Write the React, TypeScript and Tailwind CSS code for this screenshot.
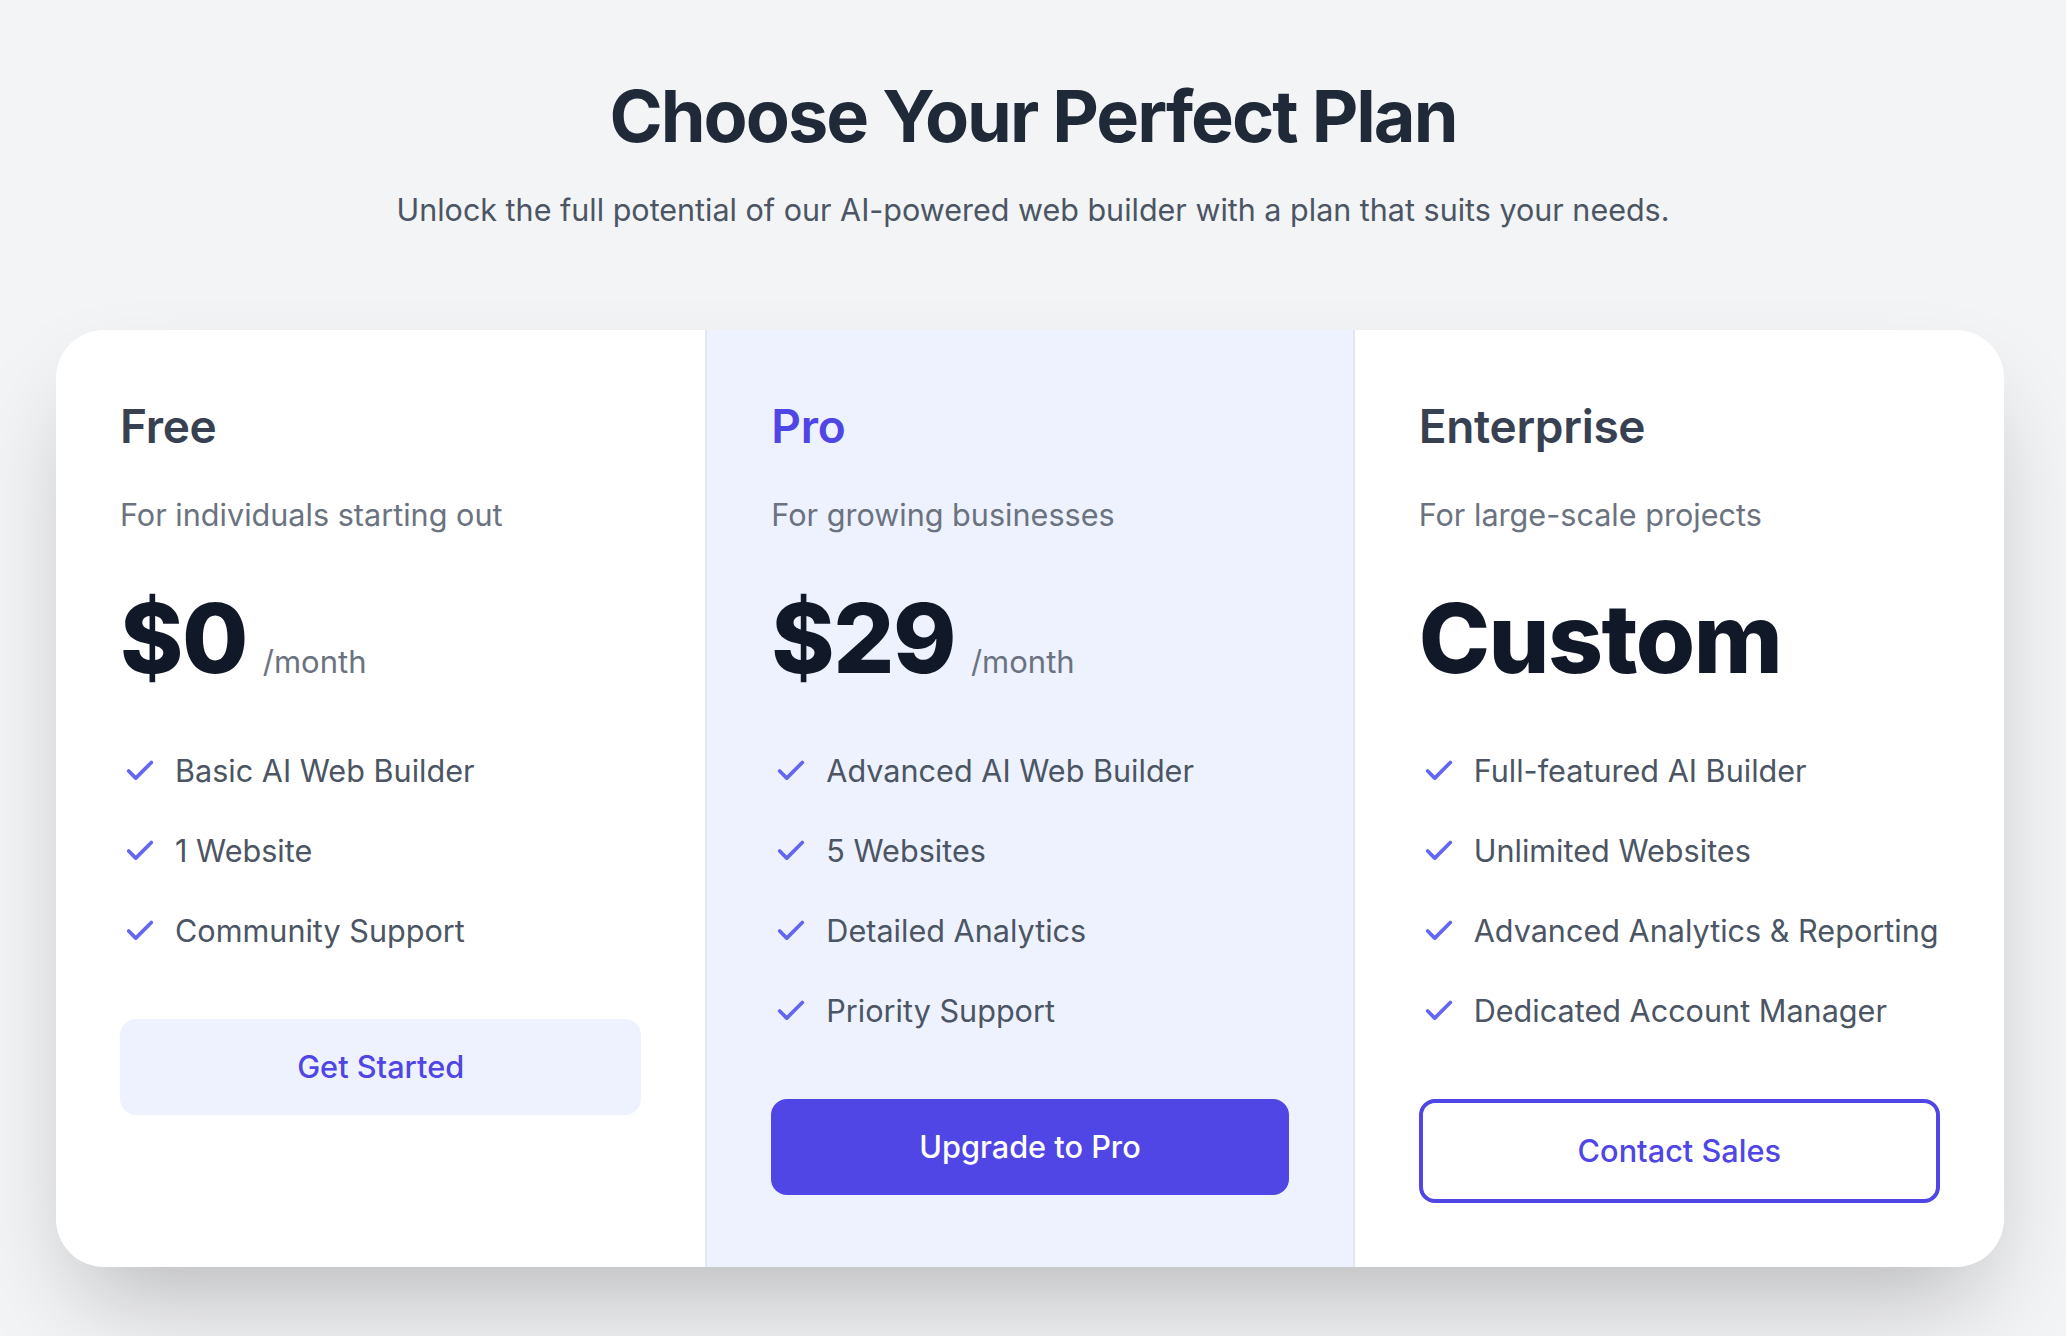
import React from "react";

type Plan = {
  name: string;
  desc: string;
  price: string;
  perMonth: boolean;
  features: string[];
  cta: string;
  variant: "soft" | "solid" | "outline";
  highlight: boolean;
};

const plans: Plan[] = [
  {
    name: "Free",
    desc: "For individuals starting out",
    price: "$0",
    perMonth: true,
    features: ["Basic AI Web Builder", "1 Website", "Community Support"],
    cta: "Get Started",
    variant: "soft",
    highlight: false,
  },
  {
    name: "Pro",
    desc: "For growing businesses",
    price: "$29",
    perMonth: true,
    features: ["Advanced AI Web Builder", "5 Websites", "Detailed Analytics", "Priority Support"],
    cta: "Upgrade to Pro",
    variant: "solid",
    highlight: true,
  },
  {
    name: "Enterprise",
    desc: "For large-scale projects",
    price: "Custom",
    perMonth: false,
    features: [
      "Full-featured AI Builder",
      "Unlimited Websites",
      "Advanced Analytics & Reporting",
      "Dedicated Account Manager",
    ],
    cta: "Contact Sales",
    variant: "outline",
    highlight: false,
  },
];

function CheckIcon() {
  return (
    <svg
      width="34"
      height="34"
      viewBox="0 0 24 24"
      fill="none"
      stroke="#6366f1"
      strokeWidth="2.6"
      strokeLinecap="round"
      strokeLinejoin="round"
      className="ml-[3px] shrink-0"
    >
      <path d="M20 6 9 17l-5-5" />
    </svg>
  );
}

function PlanColumn({ plan }: { plan: Plan }) {
  const btn =
    plan.variant === "soft"
      ? "bg-[#eef2ff] text-[#4f46e5] py-[24px]"
      : plan.variant === "solid"
      ? "bg-[#4f46e5] text-white py-[24px]"
      : "bg-white text-[#4f46e5] border-[4px] border-[#4f46e5] py-[24px]";
  return (
    <div
      className={
        plan.highlight
          ? "flex flex-col p-[64px] bg-[#eef2ff] border-x-2 border-[#e2e6ef]"
          : "flex flex-col p-[64px]"
      }
    >
      <h2
        className={
          plan.highlight
            ? "text-[46px] leading-[64px] font-semibold tracking-[-0.3px] text-[#4f46e5]"
            : "text-[46px] leading-[64px] font-semibold tracking-[-0.3px] text-[#374151]"
        }
      >
        {plan.name}
      </h2>
      <p className="mt-[37px] text-[30.6px] leading-[40px] text-[#6b7280]">{plan.desc}</p>
      <div className="mt-[55px] flex items-baseline">
        <span className="text-[96px] leading-[96px] font-extrabold text-[#111827] tracking-[-1.5px]">
          {plan.price}
        </span>
        {plan.perMonth && (
          <span className="ml-[16px] text-[31px] leading-[48px] text-[#6b7280]">/month</span>
        )}
      </div>
      <ul className="mt-[61px] flex flex-col gap-[32px]">
        {plan.features.map((f) => (
          <li key={f} className="flex items-center gap-[18px]">
            <CheckIcon />
            <span className="whitespace-nowrap text-[30.6px] leading-[48px] text-[#4b5563]">{f}</span>
          </li>
        ))}
      </ul>
      <button
        className={
          "mt-[64px] w-full rounded-[16px] text-[30.7px] leading-[48px] font-medium text-center " + btn
        }
      >
        {plan.cta}
      </button>
    </div>
  );
}

export default function App() {
  return (
    <div className="min-h-screen bg-[#f3f4f6] pl-[56px] pt-[76px] pb-[70px] font-['Inter',sans-serif]">
      <div className="w-[1954px] text-center">
        <h1 className="text-[72px] leading-[80px] font-bold text-[#1f2937] tracking-[-2px]">
          Choose Your Perfect Plan
        </h1>
        <p className="mt-[30px] text-[30.5px] leading-[48px] text-[#4b5563]">
          Unlock the full potential of our AI-powered web builder with a plan that suits your needs.
        </p>
      </div>
      <div className="mt-[96px] grid w-[1948px] grid-cols-3 overflow-hidden rounded-[48px] bg-white shadow-[0_50px_100px_-24px_rgba(0,0,0,0.25)]">
        {plans.map((p) => (
          <PlanColumn key={p.name} plan={p} />
        ))}
      </div>
    </div>
  );
}
